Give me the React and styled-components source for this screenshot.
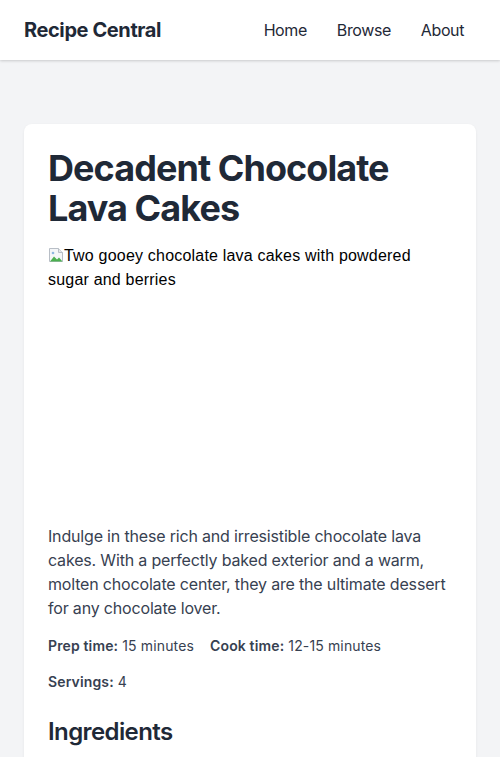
import React from 'react';
import styled, { createGlobalStyle } from 'styled-components';

const GlobalStyle = createGlobalStyle`
  * { box-sizing: border-box; }
  body {
    margin: 0;
    background: #f3f4f6;
    font-family: Inter, "Noto Sans", sans-serif;
    letter-spacing: -0.011em;
    color: #1f2937;
  }
`;

const recipe = {
  title: 'Decadent Chocolate Lava Cakes',
  alt: 'Two gooey chocolate lava cakes with powdered sugar and berries',
  intro:
    'Indulge in these rich and irresistible chocolate lava cakes. With a perfectly baked exterior and a warm, molten chocolate center, they are the ultimate dessert for any chocolate lover.',
  meta: [
    { label: 'Prep time:', value: '15 minutes' },
    { label: 'Cook time:', value: '12-15 minutes' },
    { label: 'Servings:', value: '4' },
  ],
  ingredients: [
    '1/2 cup unsalted butter',
    '4 oz semi-sweet chocolate',
    '2 large eggs',
    '2 large egg yolks',
    '1/4 cup granulated sugar',
    '2 tbsp all-purpose flour',
  ],
};

function BrokenIcon() {
  return (
    <svg width="16" height="16" viewBox="0 0 16 16">
      <path d="M1.5 1.5h9l4 4v9h-13z" fill="#f4f6f8" stroke="#b8bec6" />
      <path d="M10.5 1.5v4h4" fill="#e3e7eb" stroke="#b8bec6" />
      <path d="M2 14.5l4-5 3 3 2-2 3.5 4z" fill="#4caf50" />
      <circle cx="5" cy="6" r="1.3" fill="#8fb7e0" />
    </svg>
  );
}

function App() {
  return (
    <>
      <GlobalStyle />
      <Header>
        <Logo>Recipe Central</Logo>
        <Nav>
          <NavLink href="#">Home</NavLink>
          <NavLink href="#">Browse</NavLink>
          <NavLink href="#">About</NavLink>
        </Nav>
      </Header>
      <Main>
        <Card>
          <Title>{recipe.title}</Title>
          <ImageBox role="img" aria-label={recipe.alt}>
            <BrokenIcon />
            {recipe.alt}
          </ImageBox>
          <Intro>{recipe.intro}</Intro>
          <Meta>
            {recipe.meta.map((m) => (
              <MetaItem key={m.label}>
                <strong>{m.label}</strong> {m.value}
              </MetaItem>
            ))}
          </Meta>
          <SectionTitle>Ingredients</SectionTitle>
          <List>
            {recipe.ingredients.map((i) => (
              <li key={i}>{i}</li>
            ))}
          </List>
        </Card>
      </Main>
    </>
  );
}

const Header = styled.header`
  height: 60px;
  background: #fff;
  display: flex;
  align-items: center;
  justify-content: space-between;
  padding: 0 36px 0 24px;
  box-shadow: 0 1px 3px rgba(0, 0, 0, 0.12), 0 1px 2px rgba(0, 0, 0, 0.06);
`;

const Logo = styled.div`
  font-size: 20px;
  font-weight: 700;
  letter-spacing: -0.02em;
  color: #1f2937;
`;

const Nav = styled.nav`
  display: flex;
  gap: 30px;
`;

const NavLink = styled.a`
  color: #1f2937;
  text-decoration: none;
  font-size: 16px;
  letter-spacing: -0.025em;
`;

const Main = styled.main`
  padding: 64px 24px 24px;
`;

const Card = styled.article`
  background: #fff;
  border-radius: 8px;
  padding: 24px;
  box-shadow: 0 1px 3px rgba(0, 0, 0, 0.06);
`;

const Title = styled.h1`
  margin: 0 0 16px;
  font-size: 36px;
  line-height: 40px;
  font-weight: 700;
  letter-spacing: -0.026em;
  color: #1f2937;
`;

const ImageBox = styled.div`
  height: 256px;
  margin-bottom: 24px;
  font-family: "Liberation Sans", Arial, sans-serif;
  font-size: 16px;
  line-height: 24px;
  letter-spacing: 0.2px;
  color: #000;
  svg {
    vertical-align: -2px;
  }
`;

const Intro = styled.p`
  margin: 0 0 16px;
  font-size: 16px;
  line-height: 24px;
  color: #374151;
`;

const Meta = styled.div`
  display: flex;
  flex-wrap: wrap;
  gap: 16px;
  font-size: 14px;
  line-height: 20px;
  letter-spacing: 0.01em;
  color: #374151;
`;

const MetaItem = styled.span`
  strong {
    font-weight: 600;
  }
`;

const SectionTitle = styled.h2`
  margin: 24px 0 12px;
  font-size: 24px;
  line-height: 32px;
  font-weight: 600;
  letter-spacing: -0.025em;
  color: #1f2937;
`;

const List = styled.ul`
  margin: 0;
  padding-left: 20px;
  color: #374151;
  line-height: 24px;
`;

export default App;
